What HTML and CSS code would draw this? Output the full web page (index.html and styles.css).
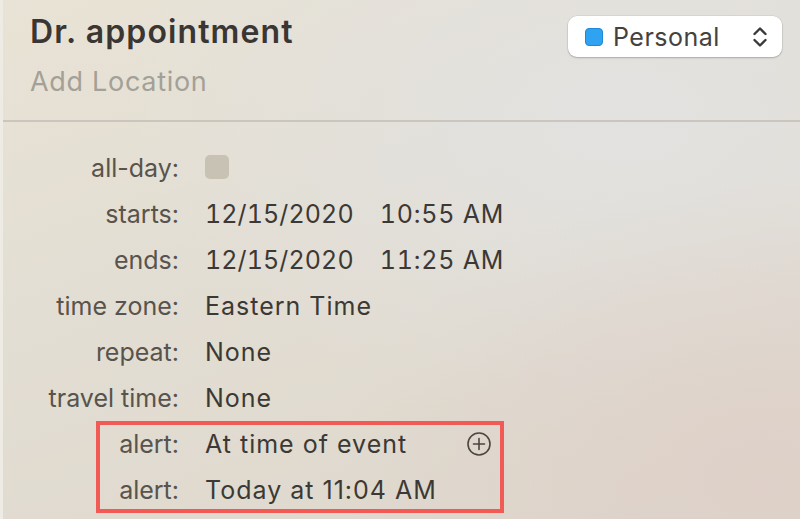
FILE: index.html
```html
<!DOCTYPE html>
<html>
<head>
<meta charset="utf-8">
<link rel="stylesheet" href="styles.css">
</head>
<body>
<div class="panel">
  <header class="head">
    <div class="titles">
      <div class="title">Dr. appointment</div>
      <div class="location">Add Location</div>
    </div>
    <div class="popup">
      <span class="swatch"></span>
      <span class="popup-label">Personal</span>
      <svg class="chev" width="16" height="22" viewBox="0 0 16 22"><path d="M2.5 8 L8 2.5 L13.5 8" fill="none" stroke="#3a3a3a" stroke-width="2.4" stroke-linecap="round" stroke-linejoin="round"/><path d="M2.5 14 L8 19.5 L13.5 14" fill="none" stroke="#3a3a3a" stroke-width="2.4" stroke-linecap="round" stroke-linejoin="round"/></svg>
    </div>
  </header>
  <div class="divider"></div>
  <section class="form">
    <div class="row"><span class="label">all-day:</span><span class="value"><span class="check"></span></span></div>
    <div class="row"><span class="label">starts:</span><span class="value"><span class="date">12/15/2020</span><span class="time">10:55 AM</span></span></div>
    <div class="row"><span class="label">ends:</span><span class="value"><span class="date">12/15/2020</span><span class="time">11:25 AM</span></span></div>
    <div class="row"><span class="label">time zone:</span><span class="value">Eastern Time</span></div>
    <div class="row"><span class="label">repeat:</span><span class="value">None</span></div>
    <div class="row"><span class="label">travel time:</span><span class="value">None</span></div>
    <div class="alerts">
      <div class="row"><span class="label">alert:</span><span class="value alert-value"><span>At time of event</span><svg class="plus" width="26" height="26" viewBox="0 0 26 26"><circle cx="13" cy="13" r="11" fill="none" stroke="#4a4640" stroke-width="1.6"/><path d="M13 7.5 V18.5 M7.5 13 H18.5" stroke="#4a4640" stroke-width="1.6" stroke-linecap="round"/></svg></span></div>
      <div class="row"><span class="label">alert:</span><span class="value">Today at 11:04 AM</span></div>
      <div class="highlight"></div>
    </div>
  </section>
</div>
</body>
</html>
```

FILE: styles.css
```css
html, body {
  margin: 0;
  padding: 0;
}
body {
  width: 800px;
  height: 519px;
  overflow: hidden;
  font-family: Inter, "Liberation Sans", sans-serif;
}
.panel {
  width: 800px;
  height: 519px;
  box-sizing: border-box;
  border-left: 3px solid #eeebe5;
  background:
    radial-gradient(ellipse 420px 300px at 760px 480px, rgba(222, 208, 200, 0.9), rgba(222, 208, 200, 0) 100%),
    radial-gradient(ellipse 500px 320px at 620px 120px, rgba(226, 226, 225, 1), rgba(226, 226, 225, 0) 100%),
    linear-gradient(160deg, #e9e3d6 0%, #e3ded3 40%, #ddd6cc 100%);
  display: flex;
  flex-direction: column;
}
.head {
  height: 120px;
  display: flex;
  justify-content: space-between;
  align-items: flex-start;
  padding: 0 18px 0 27px;
}
.titles {
  display: flex;
  flex-direction: column;
  padding-top: 12px;
}
.title {
  font-size: 32px;
  font-weight: 600;
  color: #393633;
  line-height: 40px;
  letter-spacing: 1.1px;
}
.location {
  font-size: 27px;
  color: #a3a097;
  line-height: 36px;
  margin-top: 12px;
  letter-spacing: 0.7px;
}
.popup {
  margin-top: 16px;
  width: 214px;
  height: 41px;
  box-sizing: border-box;
  background: #ffffff;
  border-radius: 9px;
  box-shadow: 0 1px 2px rgba(0, 0, 0, 0.22), 0 0 0 0.5px rgba(0, 0, 0, 0.08);
  display: flex;
  align-items: center;
  padding: 0 14px 0 17px;
}
.swatch {
  width: 18px;
  height: 18px;
  box-sizing: border-box;
  border-radius: 4px;
  background: #2fa2f2;
  border: 1px solid #1d88d6;
}
.popup-label {
  margin-left: 10px;
  font-size: 25px;
  color: #444240;
  flex: 1;
  letter-spacing: 0.5px;
}
.chev {
  display: block;
}
.divider {
  height: 2px;
  background: #cbc6bd;
}
.form {
  padding-top: 23px;
  display: flex;
  flex-direction: column;
}
.row {
  height: 46px;
  display: flex;
  align-items: center;
  font-size: 25px;
}
.label {
  width: 176px;
  text-align: right;
  color: #58544d;
}
.value {
  margin-left: 26px;
  color: #3c3935;
  display: flex;
  align-items: center;
  gap: 26px;
  letter-spacing: 1px;
}
.date, .time {
  font-variant-numeric: tabular-nums;
}
.date {
  letter-spacing: 0.1px;
}
.time {
  letter-spacing: 0.8px;
}
.check {
  width: 24px;
  height: 24px;
  border-radius: 5px;
  background: #c8c2b4;
  margin-top: -2px;
}
.alerts {
  position: relative;
}
.alert-value {
  width: 287px;
  justify-content: space-between;
}
.plus {
  display: block;
}
.highlight {
  position: absolute;
  left: 93px;
  top: 0;
  width: 408px;
  height: 92px;
  box-sizing: border-box;
  border: 4px solid #f25a55;
  pointer-events: none;
}
```
